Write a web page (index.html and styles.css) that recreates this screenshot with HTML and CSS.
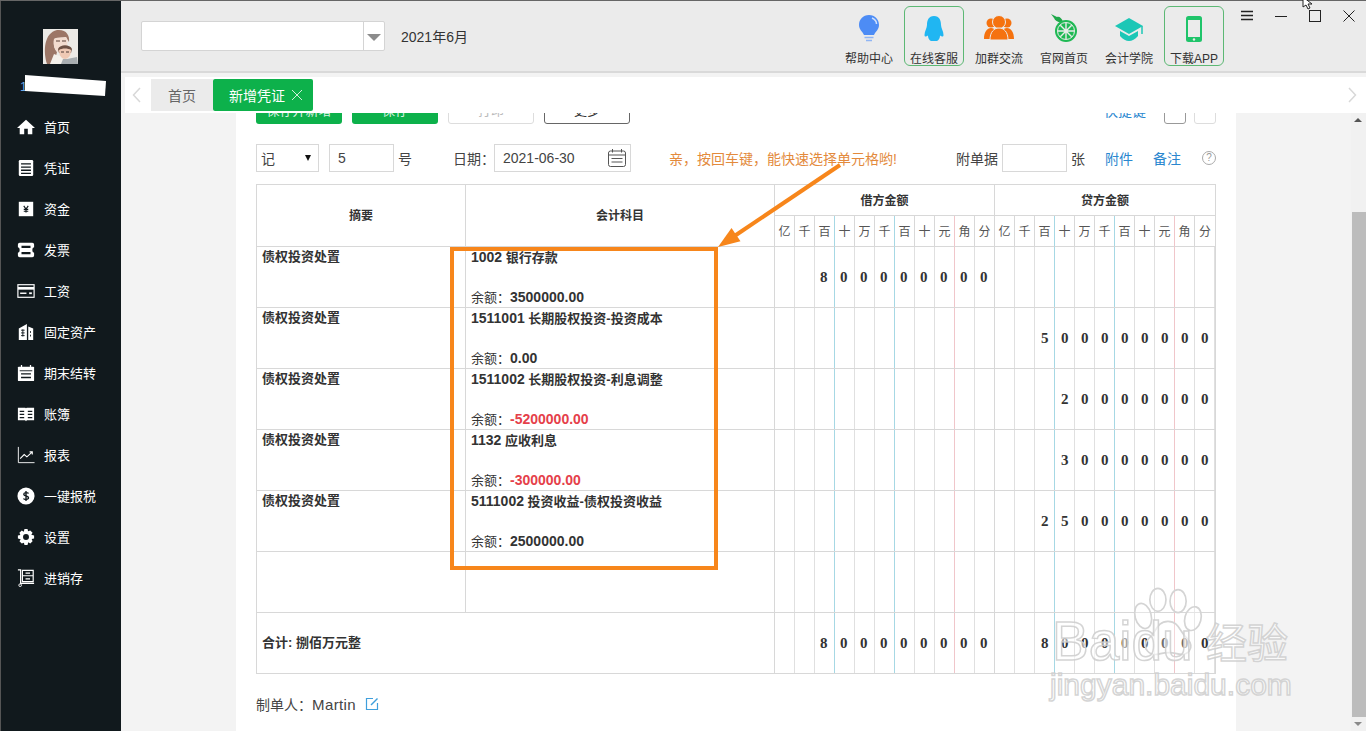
FILE: index.html
```html
<!DOCTYPE html>
<html lang="en">
<head>
    <meta charset="UTF-8">
    <title>新增凭证</title>
    <link rel="stylesheet" href="styles.css">
</head>
<body>

<div class="app">
    <aside class="sidebar">
        <svg class="avatar" viewBox="0 0 35 35">
            <rect width="35" height="35" fill="#eceae6"/>
            <path d="M4 35 C0 22 1 4 14 1 C23 0 27 6 26 13 L23 8 C18 9 13 8 11 10 C10 17 12 21 14 23 L11 35 Z" fill="#9c7666"/>
            <path d="M11 10 C15 8 20 9 23 8 C26 13 24 20 20 21 L15 23 C12 21 10 17 11 10 Z" fill="#f3dccf"/>
            <path d="M13 12 h4 M19 12 h4" stroke="#5b4038" stroke-width="1.2"/>
            <path d="M7 35 L11 25 L16 27 L26 27 L29 35 Z" fill="#f4f0ea"/>
            <path d="M15 20 C17 15 27 15 29 20 L28 24 L16 24 Z" fill="#6f5245"/>
            <path d="M16 21 C19 19 25 19 28 21 C28 27 25 30 22 30 C19 30 16 27 16 21 Z" fill="#efc9b4"/>
            <path d="M18 23 h3 M23 23 h3" stroke="#4d3a35" stroke-width="1.1"/>
            <path d="M18 35 L20 30 L24 30 L34 28 L35 35 Z" fill="#a8adb0"/>
        </svg>
        <div class="user">
            <span class="user-id">1</span>
            <svg class="user-mask" viewBox="0 0 82 22"><polygon points="0,0 81,6 80,21 0,16" fill="#fff"/></svg>
        </div>
        <nav class="menu">
            <a class="menu-item"><svg class="menu-icon" viewBox="0 0 20 20"><path d="M10 2 L20 11 H17 V18 H12 V12 H8 V18 H3 V11 H0 Z" fill="#fff"/></svg>首页</a>
            <a class="menu-item"><svg class="menu-icon" viewBox="0 0 20 20"><rect x="2" y="1" width="16" height="18" rx="1.5" fill="#fff"/><path d="M4.5 5.5 h11 M4.5 9 h11 M4.5 12.5 h11 M4.5 16 h11" stroke="#11191d" stroke-width="1.4"/></svg>凭证</a>
            <a class="menu-item"><svg class="menu-icon" viewBox="0 0 20 20"><rect x="2" y="2" width="16" height="16" fill="#fff"/><path d="M7.5 6.5 L10 10 L12.5 6.5 M7.5 10.5 h5 M7.5 12.5 h5 M10 10 v4" stroke="#11191d" stroke-width="1.3" fill="none"/></svg>资金</a>
            <a class="menu-item"><svg class="menu-icon" viewBox="0 0 20 20"><path d="M3 2 H17 Q19 2 19 4 V7 Q17 7 17 10 Q17 13 19 13 V16 Q19 18 17 18 H3 Q1 18 1 16 V13 Q3 13 3 10 Q3 7 1 7 V4 Q1 2 3 2 Z" fill="#fff"/><path d="M5 6.5 h10 M5 13.5 h10" stroke="#11191d" stroke-width="2.4"/></svg>发票</a>
            <a class="menu-item"><svg class="menu-icon" viewBox="0 0 20 20"><rect x="1" y="3" width="18" height="14" fill="none" stroke="#fff" stroke-width="1.3"/><rect x="1" y="5.5" width="18" height="3" fill="#fff"/><path d="M3.5 12.5 h7" stroke="#fff" stroke-width="1.6"/><rect x="13.5" y="11.5" width="3" height="2" fill="#fff"/></svg>工资</a>
            <a class="menu-item"><svg class="menu-icon" viewBox="0 0 20 20"><path d="M2 6 L11 1 V19 H2 Z M12.5 4 L18 6 V19 H12.5 Z" fill="#fff"/><path d="M4.5 8 h4 M4.5 11 h4 M4.5 14 h4 M6.5 7 v8 M15 9 v2 M15 13 v2" stroke="#11191d" stroke-width="1"/></svg>固定资产</a>
            <a class="menu-item"><svg class="menu-icon" viewBox="0 0 20 20"><rect x="1" y="3" width="18" height="16" rx="1" fill="#fff"/><path d="M3 7.5 h14" stroke="#11191d" stroke-width="1"/><path d="M5 1 v4 M15 1 v4" stroke="#fff" stroke-width="1.4"/><path d="M4.5 11 h11 M4.5 15 h11" stroke="#11191d" stroke-width="1.4"/></svg>期末结转</a>
            <a class="menu-item"><svg class="menu-icon" viewBox="0 0 20 20"><path d="M1 3 H9 Q10 3 10 4 Q10 3 11 3 H19 V17 H11 L10 18 L9 17 H1 Z" fill="#fff"/><path d="M3 7 h5 M3 10.5 h5 M3 14 h5 M12 7 h5 M12 10.5 h5 M12 14 h5" stroke="#11191d" stroke-width="1.3"/></svg>账簿</a>
            <a class="menu-item"><svg class="menu-icon" viewBox="0 0 20 20"><path d="M1.5 1 V18.5 H19.5" fill="none" stroke="#fff" stroke-width="1"/><path d="M3.5 14 L8 9.5 L11 12 L17 6.5 M14 6.5 H17 V9.5" fill="none" stroke="#fff" stroke-width="1.2"/></svg>报表</a>
            <a class="menu-item"><svg class="menu-icon" viewBox="0 0 20 20"><circle cx="10" cy="10" r="9.5" fill="#fff"/><path d="M12.8 7.2 C12 5.8 7.5 5.7 7.5 8 C7.5 10.5 12.8 9.5 12.8 12 C12.8 14.3 8 14.2 7.2 12.8 M10 4.5 V15.5" fill="none" stroke="#11191d" stroke-width="1.5"/></svg>一键报税</a>
            <a class="menu-item"><svg class="menu-icon" viewBox="0 0 20 20"><path d="M8.3 1 H11.7 L12.3 3.7 L14.7 2.7 L17.3 5.3 L15.9 7.5 L19 8.3 V11.7 L16.3 12.3 L17.3 14.7 L14.7 17.3 L12.5 15.9 L11.7 19 H8.3 L7.7 16.3 L5.3 17.3 L2.7 14.7 L4.1 12.5 L1 11.7 V8.3 L3.7 7.7 L2.7 5.3 L5.3 2.7 L7.5 4.1 Z" fill="#fff"/><circle cx="10" cy="10" r="3.3" fill="#11191d"/></svg>设置</a>
            <a class="menu-item"><svg class="menu-icon" viewBox="0 0 20 20"><path d="M1 1 H4 V16 H19 M6 1.5 H18 V14 H6 Z M6 7.5 H18" fill="none" stroke="#fff" stroke-width="1.3"/><path d="M9.5 4.5 h5 M9.5 11 h5" stroke="#fff" stroke-width="1.3"/><circle cx="3.5" cy="18" r="1.5" fill="none" stroke="#fff"/></svg>进销存</a>
        </nav>
    </aside>

    <div class="main">
        <header class="topbar">
            <div class="account-select">
                <span class="account-arrow"></span>
            </div>
            <span class="period">2021年6月</span>
            <div class="shortcuts">
                <a class="shortcut">
                    <svg class="shortcut-icon" viewBox="0 0 30 30">
                        <path d="M15 1 C9 1 5 5.5 5 11 C5 15.5 8.5 17.5 10 21 H20 C21.5 17.5 25 15.5 25 11 C25 5.5 21 1 15 1 Z" fill="#4d8cf5"/>
                        <path d="M18 4 C20.5 5 22.5 7.5 22.5 10" fill="none" stroke="#cfe0fb" stroke-width="1.5"/>
                        <path d="M10.5 23.5 h9 M12 26.5 h6" stroke="#8fb5f4" stroke-width="1.5"/>
                    </svg>
                    帮助中心
                </a>
                <a class="shortcut shortcut-boxed">
                    <svg class="shortcut-icon" viewBox="0 0 30 30">
                        <path d="M15 2 C9.5 2 8 6.5 8 11 C8 14 5.5 17 5.5 21 C5.5 23 7 23 9 21.5 C9 25 11 27 13 27 H17 C19 27 21 25 21 21.5 C23 23 24.5 23 24.5 21 C24.5 17 22 14 22 11 C22 6.5 20.5 2 15 2 Z" fill="#20b6f2"/>
                    </svg>
                    在线客服
                </a>
                <a class="shortcut">
                    <svg class="shortcut-icon" viewBox="0 0 30 30">
                        <circle cx="7" cy="9" r="4.5" fill="#f5720f"/>
                        <circle cx="23" cy="9" r="4.5" fill="#f5720f"/>
                        <path d="M0 25 C0 18 3 14 7 14 C11 14 14 18 14 25 Z M16 25 C16 18 19 14 23 14 C27 14 30 18 30 25 Z" fill="#f5720f"/>
                        <circle cx="15" cy="8" r="6.5" fill="#f5720f" stroke="#ebebeb"/>
                        <path d="M6 26 C6 18 10 14 15 14 C20 14 24 18 24 26 Z" fill="#f5720f" stroke="#ebebeb"/>
                    </svg>
                    加群交流
                </a>
                <a class="shortcut">
                    <svg class="shortcut-icon" viewBox="0 0 30 30">
                        <path d="M2 0 L8 3 C10 2 13 4 14 8 C10 9 6 7 5 4 Z" fill="#1fa84a"/>
                        <circle cx="17" cy="17" r="11" fill="#1fb954"/>
                        <circle cx="17" cy="17" r="8.5" fill="none" stroke="#ebebeb"/>
                        <path d="M17 9 V25 M9 17 H25 M11.3 11.3 L22.7 22.7 M22.7 11.3 L11.3 22.7" stroke="#ebebeb" stroke-width="1.4"/>
                    </svg>
                    官网首页
                </a>
                <a class="shortcut">
                    <svg class="shortcut-icon" viewBox="0 0 30 30">
                        <path d="M15 4 L29 12 L15 20 L1 12 Z" fill="#1cc7b6"/>
                        <path d="M6 17 L15 22 L24 17 V22 C21 25.5 18 27 15 27 C12 27 9 25.5 6 22 Z" fill="#1cc7b6"/>
                        <path d="M28 12 V20" stroke="#1cc7b6" stroke-width="1.5"/>
                    </svg>
                    会计学院
                </a>
                <a class="shortcut shortcut-boxed">
                    <svg class="shortcut-icon" viewBox="0 0 30 30">
                        <rect x="7" y="2" width="16" height="26" rx="2.5" fill="#1fc46a"/>
                        <rect x="9" y="6" width="12" height="17" fill="#ebebeb"/>
                        <circle cx="15" cy="25.5" r="1.2" fill="#ebebeb"/>
                    </svg>
                    下载APP
                </a>
            </div>
            <div class="window-controls">
                <svg class="window-icon" viewBox="0 0 14 14"><path d="M1 2.5 h12 M1 6.5 h12 M1 10.5 h12" stroke="#222" stroke-width="1.3"/></svg>
                <svg class="window-icon" viewBox="0 0 14 14"><path d="M1 7.5 h12" stroke="#222"/></svg>
                <svg class="window-icon" viewBox="0 0 14 14"><rect x="1.5" y="1.5" width="11" height="11" fill="none" stroke="#222"/></svg>
                <svg class="window-icon" viewBox="0 0 14 14"><path d="M1.5 1.5 L12.5 12.5 M12.5 1.5 L1.5 12.5" stroke="#222"/></svg>
            </div>
        </header>

        <div class="tabbar">
            <svg class="tab-arrow" viewBox="0 0 10 16"><path d="M8 1 L1.5 8 L8 15" fill="none" stroke="#d8d8d8" stroke-width="1.5"/></svg>
            <a class="tab">首页</a>
            <a class="tab tab-active">新增凭证<svg class="tab-close" viewBox="0 0 12 12"><path d="M1 1 L11 11 M11 1 L1 11" stroke="#cfeeda"/></svg></a>
            <svg class="tab-arrow tab-arrow-right" viewBox="0 0 10 16"><path d="M2 1 L8.5 8 L2 15" fill="none" stroke="#d8d8d8" stroke-width="1.5"/></svg>
        </div>

        <div class="content">
            <section class="page">
                <div class="actions">
                    <button class="btn btn-green">保存并新增</button>
                    <button class="btn btn-green">保存</button>
                    <button class="btn btn-light">打印</button>
                    <button class="btn btn-dark">更多</button>
                    <a class="quick-key">快捷键</a>
                    <button class="page-btn">&lt;</button>
                    <button class="page-btn page-btn-off">&gt;</button>
                </div>

                <div class="voucher-head">
                    <div class="field field-word">记<span class="word-arrow"></span></div>
                    <div class="field field-number">5</div>
                    <span class="head-label">号</span>
                    <span class="head-label head-date">日期&#xFF1A;</span>
                    <div class="field field-date">2021-06-30
                        <svg class="date-icon" viewBox="0 0 20 20"><rect x="1.5" y="3" width="17" height="15.5" rx="2" fill="none" stroke="#555"/><path d="M5.5 1 v3.5 M14.5 1 v3.5" stroke="#555"/><path d="M1.5 7 h17 M4.5 10.5 h11 M4.5 14 h11" stroke="#555"/></svg>
                    </div>
                    <span class="hint">亲&#xFF0C;按回车键&#xFF0C;能快速选择单元格哟!</span>
                    <span class="head-label head-attach">附单据</span>
                    <div class="field field-attach"></div>
                    <span class="head-label">张</span>
                    <a class="head-link head-link-first">附件</a>
                    <a class="head-link">备注</a>
                    <span class="help">?</span>
                </div>

                <table class="voucher">
                    <colgroup>
                        <col class="col-summary">
                        <col class="col-subject">
                        <col class="col-unit" span="21">
                        <col class="col-unit-last">
                    </colgroup>
                    <thead>
                        <tr class="head-top">
                            <th rowspan="2">摘要</th>
                            <th rowspan="2">会计科目</th>
                            <th colspan="11">借方金额</th>
                            <th colspan="11">贷方金额</th>
                        </tr>
                        <tr class="head-units">
                            <th>亿</th><th>千</th><th class="line-blue">百</th><th>十</th><th>万</th><th class="line-blue">千</th><th>百</th><th>十</th><th class="line-red">元</th><th>角</th><th>分</th>
                            <th>亿</th><th>千</th><th class="line-blue">百</th><th>十</th><th>万</th><th class="line-blue">千</th><th>百</th><th>十</th><th class="line-red">元</th><th>角</th><th>分</th>
                        </tr>
                    </thead>
                    <tbody>
                        <tr>
                            <td class="summary">债权投资处置</td>
                            <td class="subject"><div class="account"><b class="code">1002</b> 银行存款</div><div class="balance">余额&#xFF1A;<b>3500000.00</b></div></td>
                            <td class="money" colspan="11"><span>800000000</span></td>
                            <td class="money" colspan="11"></td>
                        </tr>
                        <tr>
                            <td class="summary">债权投资处置</td>
                            <td class="subject"><div class="account"><b class="code">1511001</b> 长期股权投资-投资成本</div><div class="balance">余额&#xFF1A;<b>0.00</b></div></td>
                            <td class="money" colspan="11"></td>
                            <td class="money" colspan="11"><span>500000000</span></td>
                        </tr>
                        <tr>
                            <td class="summary">债权投资处置</td>
                            <td class="subject"><div class="account"><b class="code">1511002</b> 长期股权投资-利息调整</div><div class="balance">余额&#xFF1A;<b class="minus">-5200000.00</b></div></td>
                            <td class="money" colspan="11"></td>
                            <td class="money" colspan="11"><span>20000000</span></td>
                        </tr>
                        <tr>
                            <td class="summary">债权投资处置</td>
                            <td class="subject"><div class="account"><b class="code">1132</b> 应收利息</div><div class="balance">余额&#xFF1A;<b class="minus">-300000.00</b></div></td>
                            <td class="money" colspan="11"></td>
                            <td class="money" colspan="11"><span>30000000</span></td>
                        </tr>
                        <tr>
                            <td class="summary">债权投资处置</td>
                            <td class="subject"><div class="account"><b class="code">5111002</b> 投资收益-债权投资收益</div><div class="balance">余额&#xFF1A;<b>2500000.00</b></div></td>
                            <td class="money" colspan="11"></td>
                            <td class="money" colspan="11"><span>250000000</span></td>
                        </tr>
                        <tr>
                            <td class="summary"></td>
                            <td class="subject"></td>
                            <td class="money" colspan="11"></td>
                            <td class="money" colspan="11"></td>
                        </tr>
                        <tr>
                            <td class="total" colspan="2">合计: 捌佰万元整</td>
                            <td class="money" colspan="11"><span>800000000</span></td>
                            <td class="money" colspan="11"><span>800000000</span></td>
                        </tr>
                    </tbody>
                </table>

                <div class="maker">制单人&#xFF1A;<span class="maker-name">Martin</span>
                    <svg class="edit-icon" viewBox="0 0 14 14"><path d="M8 1.5 H1.5 V12.5 H12.5 V6" fill="none" stroke="#3f9fdc" stroke-width="1.2"/><path d="M6 8 L12.5 1.5" stroke="#3f9fdc" stroke-width="1.4"/></svg>
                </div>
            </section>

            <div class="scrollbar">
                <span class="scroll-up"></span>
                <span class="scroll-thumb"></span>
                <span class="scroll-down"></span>
            </div>
        </div>
    </div>
</div>

<!-- annotation drawn on top of the screenshot -->
<div class="callout"></div>
<svg class="callout-arrow" viewBox="0 0 140 100">
    <path d="M122 2 L15 74" stroke="#f7861b" stroke-width="4"/>
    <polygon points="0,84 22.5,78.3 13.5,65" fill="#f7861b"/>
</svg>

<!-- watermark -->
<div class="watermark">
    <svg class="wm-paw" viewBox="0 0 110 105">
        <g fill="#fff" fill-opacity=".3" stroke="#d4d4d4" stroke-width="2.5">
            <ellipse cx="18" cy="42" rx="12" ry="19" transform="rotate(-15 18 42)"/>
            <ellipse cx="40" cy="18" rx="12" ry="17"/>
            <ellipse cx="70" cy="20" rx="12" ry="17"/>
            <ellipse cx="92" cy="46" rx="12" ry="18" transform="rotate(15 92 46)"/>
            <path d="M55 50 C38 50 38 66 26 76 C14 90 28 103 44 98 C52 96 60 96 68 98 C84 103 96 90 84 76 C72 66 72 50 55 50 Z"/>
        </g>
    </svg>
    <span class="wm-baidu">Baidu</span>
    <span class="wm-jy">经验</span>
    <span class="wm-url">jingyan.baidu.com</span>
</div>

<svg class="cursor" viewBox="0 0 14 10"><path d="M1 -3 L1 7 L4 5 L6 9 L8 8 L6 4 L10 4 Z" fill="#fff" stroke="#222"/></svg>

</body>
</html>
```

FILE: styles.css
```css
* {
    box-sizing: border-box;
}

body {
    margin: 0;
    width: 1366px;
    height: 731px;
    overflow: hidden;
    position: relative;
    font-family: "Liberation Sans", "Noto Sans CJK SC", sans-serif;
    font-size: 13px;
    color: #333;
    background-color: #f3f3f3;
}

.app {
    display: flex;
    height: 731px;
    border-top: 1px solid #666;
}

/* sidebar */
.sidebar {
    width: 121px;
    flex-shrink: 0;
    background-color: #11191d;
    border-left: 1px solid #555;
    color: #fff;
    display: flex;
    flex-direction: column;
    align-items: center;
    padding-top: 28px;
}

.avatar {
    width: 35px;
    height: 35px;
    display: block;
    margin-right: 1px;
}

.user {
    width: 100%;
    height: 22px;
    margin-top: 11px;
    padding-left: 19px;
    display: flex;
    align-items: center;
}

.user-id {
    color: #6aa9e8;
    font-size: 13px;
    width: 5px;
    overflow: hidden;
}

.user-mask {
    width: 82px;
    height: 22px;
    display: block;
}

.menu {
    width: 100%;
    margin-top: 9px;
    display: flex;
    flex-direction: column;
}

.menu-item {
    height: 41px;
    display: flex;
    align-items: center;
    padding-left: 16px;
    color: #fff;
    font-size: 13px;
}

.menu-icon {
    width: 18px;
    height: 18px;
    margin-right: 9px;
    flex-shrink: 0;
}

/* top bar */
.main {
    flex: 1;
    min-width: 0;
    display: flex;
    flex-direction: column;
}

.topbar {
    height: 72px;
    flex-shrink: 0;
    background-color: #ebebeb;
    border-bottom: 2px solid #d9d9d9;
    display: flex;
    align-items: flex-start;
    padding-left: 20px;
}

.account-select {
    width: 244px;
    height: 30px;
    margin-top: 20px;
    background-color: #fff;
    border: 1px solid #d4d4d4;
    border-radius: 2px;
    display: flex;
    justify-content: flex-end;
}

.account-arrow {
    width: 21px;
    height: 100%;
    border-left: 1px solid #d4d4d4;
    position: relative;
}

.account-arrow::after {
    content: "";
    position: absolute;
    left: 3px;
    top: 12px;
    border-left: 7px solid transparent;
    border-right: 7px solid transparent;
    border-top: 7px solid #8c8c8c;
}

.period {
    margin-top: 25px;
    margin-left: 16px;
    font-size: 14px;
    width: 438px;
    color: #333;
}

.shortcuts {
    display: flex;
    gap: 5px;
    margin-top: 5px;
}

.shortcut {
    width: 60px;
    height: 60px;
    display: flex;
    flex-direction: column;
    align-items: center;
    font-size: 12px;
    line-height: 16px;
    color: #333;
    white-space: nowrap;
    border: 1px solid transparent;
    border-radius: 6px;
}

.shortcut-boxed {
    border-color: #5cb874;
}

.shortcut-icon {
    width: 30px;
    height: 30px;
    flex-shrink: 0;
    margin-top: 7px;
    margin-bottom: 7px;
}

.window-controls {
    display: flex;
    gap: 20px;
    margin-top: 8px;
    margin-left: 16px;
}

.window-icon {
    width: 14px;
    height: 14px;
}

/* tabs */
.tabbar {
    height: 36px;
    flex-shrink: 0;
    margin-top: 4px;
    margin-left: 4px;
    background-color: #fff;
    display: flex;
    align-items: center;
    position: relative;
    z-index: 2;
    padding-left: 7px;
}

.tab-arrow {
    width: 10px;
    height: 16px;
    margin-right: 9px;
}

.tab-arrow-right {
    margin-left: auto;
    margin-right: 9px;
}

.tab {
    height: 32px;
    display: flex;
    align-items: center;
    justify-content: center;
    background-color: #ebebeb;
    color: #666;
    width: 62px;
    font-size: 14px;
}

.tab-active {
    width: 100px;
    justify-content: flex-start;
    padding-left: 16px;
    background-color: #0db14b;
    color: #fff;
    border-radius: 2px;
}

.tab-close {
    width: 12px;
    height: 12px;
    margin-left: 6px;
}

/* voucher page */
.content {
    flex: 1;
    min-height: 0;
    display: flex;
    padding-left: 115px;
    overflow: hidden;
}

.page {
    width: 1000px;
    background-color: #fff;
    padding: 0 20px;
    flex-shrink: 0;
}

.actions {
    height: 11px;
    display: flex;
    align-items: flex-end;
    gap: 10px;
}

.btn {
    width: 86px;
    height: 30px;
    flex-shrink: 0;
    border-radius: 3px;
    font-family: inherit;
    font-size: 13px;
    padding: 0;
    background-color: #fff;
}

.btn-green {
    background-color: #0db14b;
    border: none;
    color: #d9f3e2;
}

.btn-light {
    border: 1px solid #dddddd;
    color: #bbbbbb;
}

.btn-dark {
    border: 1px solid #666;
    color: #333;
}

.quick-key {
    margin-left: auto;
    color: #2a87cf;
    font-size: 14px;
    line-height: 16px;
    margin-bottom: 5px;
    margin-right: 8px;
}

.page-btn {
    width: 22px;
    height: 30px;
    padding: 0;
    border: 1px solid #999;
    border-radius: 3px;
    background-color: #fff;
    color: #555;
    font-size: 10px;
    margin-right: -2px;
}

.page-btn-off {
    border-color: #dddddd;
    color: #bbb;
    margin-right: 0;
}

.voucher-head {
    display: flex;
    align-items: center;
    height: 28px;
    margin-top: 20px;
}

.field {
    height: 28px;
    border: 1px solid #d8d8d8;
    display: flex;
    align-items: center;
    color: #444;
    background-color: #fff;
    flex-shrink: 0;
}

.field-word {
    width: 63px;
    padding-left: 4px;
    font-size: 14px;
    justify-content: space-between;
    padding-right: 7px;
}

.word-arrow {
    border-left: 3px solid transparent;
    border-right: 3px solid transparent;
    border-top: 6px solid #111;
}

.field-number {
    width: 65px;
    margin-left: 10px;
    padding-left: 8px;
    font-size: 14px;
}

.head-label {
    margin-left: 4px;
    font-size: 14px;
    color: #444;
    flex-shrink: 0;
}

.head-date {
    margin-left: 41px;
    width: 41px;
    white-space: nowrap;
}

.field-date {
    width: 137px;
    padding-left: 8px;
    font-size: 14px;
    justify-content: space-between;
    padding-right: 3px;
}

.date-icon {
    width: 20px;
    height: 20px;
}

.hint {
    margin-left: 38px;
    color: #e38a3c;
    font-size: 14px;
    width: 229px;
    white-space: nowrap;
    flex-shrink: 0;
}

.head-attach {
    margin-left: 58px;
    width: 46px;
    white-space: nowrap;
}

.field-attach {
    width: 65px;
}

.head-link {
    color: #2a87cf;
    font-size: 14px;
    flex-shrink: 0;
    width: 29px;
}

.head-link-first {
    margin-left: 20px;
    margin-right: 19px;
}

.help {
    width: 14px;
    height: 14px;
    margin-left: 20px;
    border: 1px solid #aaa;
    border-radius: 50%;
    color: #999;
    font-size: 10px;
    line-height: 12px;
    text-align: center;
    flex-shrink: 0;
}

/* table */
.voucher {
    width: 960px;
    margin-top: 12px;
    table-layout: fixed;
    border-collapse: separate;
    border-spacing: 0;
    border-top: 1px solid #d8d8d8;
    border-left: 1px solid #d8d8d8;
}

.col-summary {
    width: 209px;
}

.col-subject {
    width: 309px;
}

.col-unit {
    width: 20px;
}

.col-unit-last {
    width: 21px;
}

.voucher th,
.voucher td {
    border-right: 1px solid #d8d8d8;
    border-bottom: 1px solid #d8d8d8;
    padding: 0;
}

.voucher th {
    font-size: 12px;
    font-weight: bold;
    color: #333;
    padding-bottom: 2px;
}

.head-top th {
    height: 31px;
}

.head-units th {
    height: 31px;
    font-weight: normal;
    font-size: 12px;
    color: #555;
}

.voucher .line-blue {
    border-right-color: #a6d8e4;
}

.voucher .line-red {
    border-right-color: #f0c6ca;
}

.voucher tbody tr {
    height: 61px;
}

.voucher .summary,
.voucher .subject {
    vertical-align: top;
    font-weight: bold;
    color: #333;
    font-size: 13px;
    line-height: 20px;
    padding: 0 5px;
}

.voucher .total {
    font-weight: bold;
    font-size: 13px;
    color: #333;
    padding: 0 5px 4px;
}

.account {
    height: 20px;
    white-space: nowrap;
}

.code {
    font-size: 14px;
}

.balance {
    height: 20px;
    margin-top: 20px;
    font-weight: normal;
    white-space: nowrap;
}

.balance b {
    font-size: 14px;
    font-weight: bold;
}

.balance .minus {
    color: #e5404a;
}

.voucher .money {
    text-align: right;
    overflow: hidden;
    white-space: nowrap;
    font-family: "Liberation Serif", serif;
    font-size: 15px;
    font-weight: bold;
    color: #333;
    background-image:
        linear-gradient(#a6d8e4, #a6d8e4),
        linear-gradient(#a6d8e4, #a6d8e4),
        linear-gradient(#f0c6ca, #f0c6ca),
        repeating-linear-gradient(to right, transparent 0, transparent 19px, #e0e0e0 19px, #e0e0e0 20px);
    background-size: 1px 100%, 1px 100%, 1px 100%, auto;
    background-position: 59px 0, 119px 0, 179px 0, 0 0;
    background-repeat: no-repeat;
}

.money span {
    display: inline-block;
    letter-spacing: 12.5px;
    margin-right: -6px;
}

.maker {
    margin-top: 20px;
    font-size: 14px;
    color: #444;
    display: flex;
    align-items: center;
    height: 20px;
}

.maker-name {
    font-size: 15px;
    letter-spacing: 0.4px;
}

.edit-icon {
    width: 14px;
    height: 14px;
    margin-left: 9px;
}

/* scrollbar */
.scrollbar {
    width: 15px;
    margin-left: auto;
    background-color: #f1f1f1;
    display: flex;
    flex-direction: column;
    align-items: center;
    position: relative;
}

.scroll-up,
.scroll-down {
    position: absolute;
    left: 3px;
    border-left: 4px solid transparent;
    border-right: 4px solid transparent;
}

.scroll-up {
    top: 5px;
    border-bottom: 4px solid #555;
}

.scroll-down {
    bottom: 5px;
    border-top: 4px solid #8a8a8a;
}

.scroll-thumb {
    width: 14px;
    height: 505px;
    margin-top: 99px;
    margin-left: 1px;
    background-color: #bcbcbc;
}

/* annotation */
.callout {
    position: absolute;
    left: 450px;
    top: 247px;
    width: 268px;
    height: 323px;
    border: 4px solid #f7861b;
}

.callout-arrow {
    position: absolute;
    left: 718px;
    top: 163px;
    width: 140px;
    height: 100px;
}

/* watermark */
.watermark {
    position: absolute;
    left: 1045px;
    top: 582px;
    width: 250px;
    height: 120px;
    pointer-events: none;
}

.wm-baidu,
.wm-jy,
.wm-url {
    position: absolute;
    color: rgba(255, 255, 255, 0.55);
    -webkit-text-stroke: 1.5px rgba(205, 205, 205, 0.85);
    white-space: nowrap;
}

.wm-baidu {
    left: 7px;
    top: 26px;
    font-size: 55px;
    line-height: 66px;
}

.wm-paw {
    position: absolute;
    left: 86px;
    top: 3px;
    width: 74px;
    height: 76px;
}

.wm-jy {
    left: 161px;
    top: 32px;
    font-size: 41px;
    line-height: 52px;
    font-family: "Noto Sans CJK SC", sans-serif;
}

.wm-url {
    left: 5px;
    top: 85px;
    font-size: 30px;
    line-height: 36px;
}

.cursor {
    position: absolute;
    left: 1302px;
    top: 0;
    width: 14px;
    height: 10px;
}
```
